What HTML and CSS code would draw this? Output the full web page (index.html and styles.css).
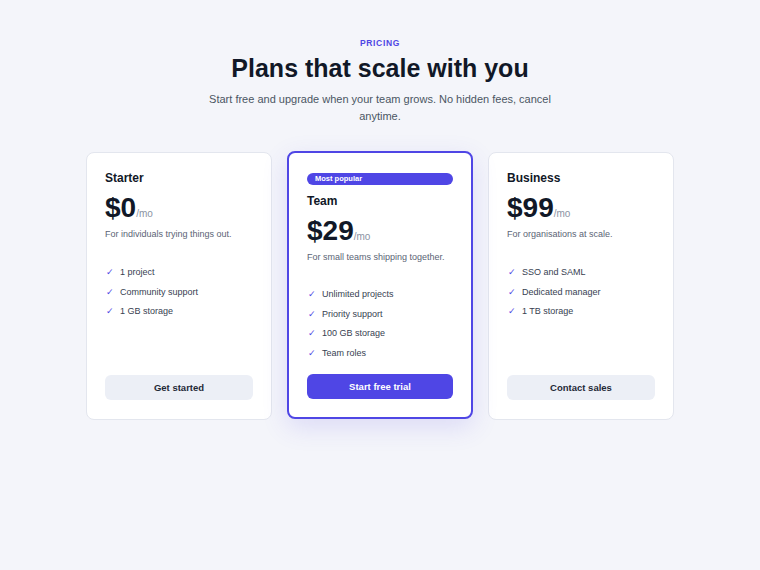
FILE: index.html
```html
<!DOCTYPE html>
<html lang="en">
<head>
  <meta charset="UTF-8" />
  <meta name="viewport" content="width=device-width, initial-scale=1.0" />
  <title>Pricing</title>
  <link rel="stylesheet" href="styles.css">
</head>
<body>
  <div class="page">
    <!-- Header -->
    <p class="eyebrow">PRICING</p>
    <h1>Plans that scale with you</h1>
    <p class="lead">Start free and upgrade when your team grows. No hidden fees, cancel anytime.</p>

    <!-- Plans -->
    <div class="plans">
      <div class="plan">
        <h2>Starter</h2>
        <div class="price"><span class="amount">$0</span><span class="per">/mo</span></div>
        <p class="desc">For individuals trying things out.</p>
        <ul class="features">
          <li><span class="check">✓</span>1 project</li>
          <li><span class="check">✓</span>Community support</li>
          <li><span class="check">✓</span>1 GB storage</li>
        </ul>
        <button class="btn">Get started</button>
      </div>

      <div class="plan featured">
        <span class="badge">Most popular</span>
        <h2>Team</h2>
        <div class="price"><span class="amount">$29</span><span class="per">/mo</span></div>
        <p class="desc">For small teams shipping together.</p>
        <ul class="features">
          <li><span class="check">✓</span>Unlimited projects</li>
          <li><span class="check">✓</span>Priority support</li>
          <li><span class="check">✓</span>100 GB storage</li>
          <li><span class="check">✓</span>Team roles</li>
        </ul>
        <button class="btn primary">Start free trial</button>
      </div>

      <div class="plan">
        <h2>Business</h2>
        <div class="price"><span class="amount">$99</span><span class="per">/mo</span></div>
        <p class="desc">For organisations at scale.</p>
        <ul class="features">
          <li><span class="check">✓</span>SSO and SAML</li>
          <li><span class="check">✓</span>Dedicated manager</li>
          <li><span class="check">✓</span>1 TB storage</li>
        </ul>
        <button class="btn">Contact sales</button>
      </div>
    </div>
  </div>
</body>
</html>
```

FILE: styles.css
```css
* {
  box-sizing: border-box;
}
body {
  margin: 0;
  font-family: 'Liberation Sans', Arial, sans-serif;
  background: #f4f5fa;
  color: #111827;
}
.page {
  padding: 38px 0 40px;
  text-align: center;
}
.eyebrow {
  margin: 0;
  font-size: 8.5px;
  line-height: 10px;
  font-weight: 700;
  letter-spacing: 0.08em;
  color: #4f46e5;
}
h1 {
  margin: 5px 0 0;
  font-size: 25px;
  line-height: 30px;
  font-weight: 700;
  color: #111827;
}
.lead {
  max-width: 345px;
  margin: 8px auto 0;
  font-size: 11px;
  line-height: 16.5px;
  color: #4b5563;
}
.plans {
  display: grid;
  grid-template-columns: repeat(3, 1fr);
  gap: 15px;
  width: 588px;
  margin: 28px auto 0;
  text-align: left;
}
.plan {
  display: flex;
  flex-direction: column;
  align-items: flex-start;
  background: #fff;
  border: 1px solid #e3e6ee;
  border-radius: 8px;
  padding: 18px 18px 19px;
}
.plan.featured {
  border: 2px solid #4f46e5;
  padding: 20px 18px 18px;
  box-shadow: 0 8px 26px rgba(79, 70, 229, 0.15);
  transform: translateY(-1px);
}
.badge {
  display: block;
  width: 100%;
  height: 12px;
  line-height: 12px;
  padding: 0 8px;
  border-radius: 999px;
  background: #4f46e5;
  color: #fff;
  font-size: 7.5px;
  font-weight: 700;
  margin-bottom: 9px;
}
h2 {
  margin: 0;
  font-size: 12px;
  line-height: 15px;
  font-weight: 700;
  color: #111827;
}
.price {
  display: flex;
  align-items: baseline;
  margin-top: 6px;
  line-height: 32px;
}
.amount {
  font-size: 28px;
  font-weight: 700;
  color: #111827;
}
.per {
  font-size: 10px;
  color: #8b93a3;
}
.desc {
  margin: -2px 0 0;
  font-size: 9px;
  line-height: 13px;
  color: #5b6475;
}
.features {
  list-style: none;
  margin: 24px 0 0;
  padding: 0;
  display: flex;
  flex-direction: column;
  gap: 5.5px;
}
.features li {
  display: flex;
  align-items: center;
  font-size: 9px;
  line-height: 14px;
  color: #374151;
}
.check {
  width: 15px;
  padding-left: 1px;
  font-size: 9px;
  color: #4f46e5;
}
.btn {
  width: 100%;
  height: 25px;
  margin-top: auto;
  border: none;
  border-radius: 6px;
  background: #eceff6;
  color: #1f2937;
  font-family: inherit;
  font-size: 9.5px;
  font-weight: 700;
  cursor: pointer;
}
.btn.primary {
  background: #4f46e5;
  color: #fff;
}
.featured .features {
  margin-top: 23px;
  margin-bottom: 14px;
}
```
